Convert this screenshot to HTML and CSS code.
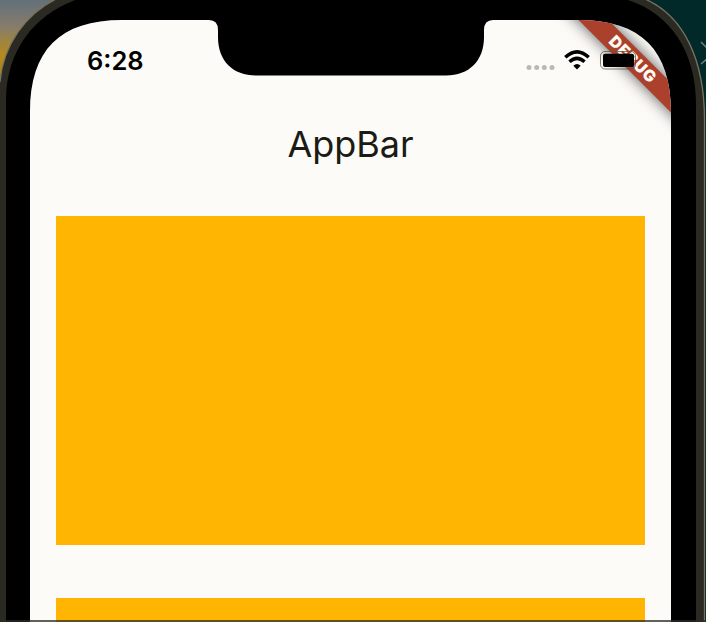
FILE: index.html
```html
<!DOCTYPE html>
<html lang="en">
<head>
<meta charset="utf-8">
<title>AppBar</title>
<link rel="stylesheet" href="styles.css">
</head>
<body>
<div class="desktop">
  <svg class="frame" viewBox="0 0 706 622" aria-hidden="true">
    <defs>
      <linearGradient id="wall" x1="0" y1="0" x2="0" y2="1">
        <stop offset="0" stop-color="#63707a"/>
        <stop offset=".3" stop-color="#857c6c"/>
        <stop offset=".65" stop-color="#b58a1e"/>
        <stop offset="1" stop-color="#a9800f"/>
      </linearGradient>
    </defs>
    <rect width="60" height="85" fill="url(#wall)"/>
    <rect x="630" width="76" height="622" fill="#02292a"/>
    <path d="M-1 622V90C1 48 25 14 56-1H645C684 16 705 60 705 120V622Z" fill="#2b2a22"/>
    <path d="M0 82C3 45 26 14 56-1M645-1C684 16 704.500 60 704.500 120V622" fill="none" stroke="#77735f" stroke-width="1.300"/>
    <path d="M6 622V100C6 50 35 14 78-1H625C669 12 696 50 696 105V622Z" fill="#000"/>
    <path d="M701 42L707 48M701 64L707 59" fill="none" stroke="#71807a" stroke-width="1.500"/>
  </svg>
  <main class="screen">
    <header class="status">
      <span class="time">6:28</span>
      <svg class="signals" width="114" height="24" viewBox="0 0 114 24" aria-hidden="true">
        <g fill="#bbb9b5">
          <circle cx="4" cy="19.500" r="2.500"/><circle cx="11.700" cy="19.500" r="2.500"/><circle cx="19.300" cy="19.500" r="2.500"/><circle cx="27" cy="19.500" r="2.500"/>
        </g>
        <g fill="none" stroke="#000" stroke-width="3.500">
          <path d="M40.300 9.300Q52 -1.700 63.700 9.300"/>
          <path d="M44.500 13.700Q52 7 59.500 13.700"/>
        </g>
        <path d="M48.300 17.700Q52 14.300 55.700 17.700L52 21.500Z"/>
        <rect x="75.500" y="3.500" width="35" height="17.500" rx="4.500" fill="none" stroke="#55513f" stroke-opacity=".75"/>
        <rect x="78" y="5.800" width="31" height="13.200" rx="2"/>
      </svg>
    </header>
    <h1 class="title">AppBar</h1>
    <section class="list">
      <div class="card"></div>
      <div class="card"></div>
    </section>
    <div class="banner">DEBUG</div>
  </main>
  <div class="edge"></div>
</div>
</body>
</html>
```
FILE: styles.css
```css
* { box-sizing: border-box; }
body { margin: 0; overflow: hidden; background: #000; }
.desktop { position: relative; width: 706px; height: 622px; padding: 20px 35px 0 30px; overflow: hidden; }
.frame { position: absolute; inset: 0; width: 706px; height: 622px; }
.screen {
  position: relative;
  height: 602px;
  overflow: hidden;
  background: #fcfbf8;
  font-family: Inter, "Liberation Sans", sans-serif;
  clip-path: path("M0 92C0 30 30 0 92 0H179Q188 0 188 10V17C188 41 203 55.500 226 55.500H416C439 55.500 454 41 454 17V10Q454 0 463 0H549C611 0 641 30 641 92V602H0Z");
}
.status {
  position: relative;
  z-index: 2;
  display: flex;
  justify-content: space-between;
  height: 90px;
  padding: 28px 32px 0 57px;
}
.time { font-size: 25.500px; font-weight: 600; line-height: 26px; color: #000; }
.title {
  margin: 0;
  height: 68px;
  font-size: 36px;
  font-weight: 400;
  line-height: 68px;
  text-align: center;
  color: #1b1a14;
}
.list { display: flex; flex-direction: column; gap: 53px; padding: 38px 26px 0; }
.card { height: 329px; flex: none; background: #ffb502; }
.banner {
  position: absolute;
  z-index: 1;
  top: 29px;
  left: 503px;
  width: 200px;
  height: 20.500px;
  transform: rotate(45deg);
  background: #ab402c;
  box-shadow: 0 0 15px rgba(0, 0, 0, .65);
  color: #fffaf2;
  font-size: 16px;
  font-weight: 900;
  line-height: 20.500px;
  letter-spacing: .8px;
  text-align: center;
}
.edge { position: absolute; left: 0; right: 0; bottom: 0; height: 2px; background: rgba(45, 45, 40, .75); }
```
